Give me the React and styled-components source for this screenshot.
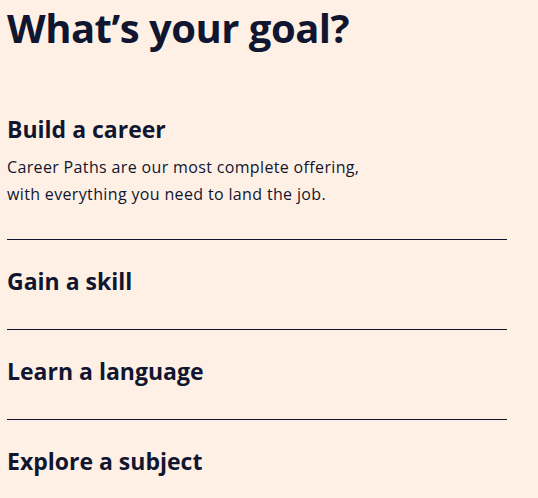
import React from "react";
import styled, { createGlobalStyle } from "styled-components";

const GlobalStyle = createGlobalStyle`
  body {
    margin: 0;
    background-color: #fff0e5;
    color: #10162f;
    font-family: "Open Sans", Lato, sans-serif;
  }
`;

const goals = [
  {
    title: "Build a career",
    text: ["Career Paths are our most complete offering,", "with everything you need to land the job."],
  },
  { title: "Gain a skill" },
  { title: "Learn a language" },
  { title: "Explore a subject" },
];

const App = () => {
  return (
    <>
      <GlobalStyle />
      <StPage>
        <StTitle>What’s your goal?</StTitle>
        <StList>
          {goals.map((goal, i) => (
            <StItem key={goal.title} $last={i === goals.length - 1}>
              <StItemTitle>{goal.title}</StItemTitle>
              {goal.text && (
                <StText>
                  {goal.text[0]}
                  <br />
                  {goal.text[1]}
                </StText>
              )}
            </StItem>
          ))}
        </StList>
      </StPage>
    </>
  );
};

export default App;

const StPage = styled.div`
  padding: 0 7px;
  width: 500px;
`;

const StTitle = styled.h1`
  margin: 0;
  font-size: 40px;
  line-height: 55px;
  font-weight: 700;
  letter-spacing: -0.5px;
`;

const StList = styled.div`
  display: flex;
  flex-direction: column;
  margin-top: 58px;
`;

const StItem = styled.div`
  padding: 25px 0 32px;
  border-bottom: ${(p) => (p.$last ? "none" : "1px solid #10162f")};

  &:first-child {
    padding-top: 0;
    padding-bottom: 31px;
  }
`;

const StItemTitle = styled.h2`
  margin: 0;
  font-size: 23px;
  line-height: 32px;
  font-weight: 700;
`;

const StText = styled.p`
  margin: 9px 0 0;
  font-size: 16px;
  line-height: 27px;
  font-weight: 400;
  letter-spacing: 0.35px;
`;
